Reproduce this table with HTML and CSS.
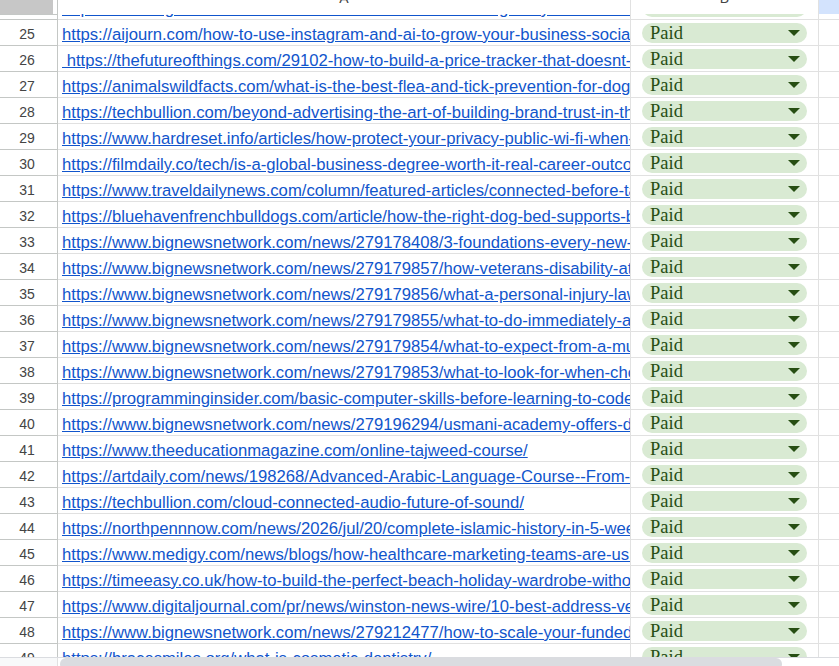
FILE: index.html
```html
<!DOCTYPE html>
<html>
<head>
<meta charset="utf-8">
<link rel="stylesheet" href="styles.css">
</head>
<body>
<div class="sheet">
  <div class="head">
    <div class="corner"><div class="corner-fill"></div></div>
    <div class="colhead"><span>A</span></div>
    <div class="colhead"><span>B</span></div>
    <div class="colhead sel"></div>
  </div>
  <div class="body">
    <div class="rows">
      <div class="row"><div class="num">24</div><div class="cell"><a class="link">https://www.bignewsnetwork.com/news/279178401/how-to-grow-your-business-online</a></div><div class="cell chipcell"><div class="chip"><span>Paid</span><i class="arrow"></i></div></div><div class="rest"></div></div>
      <div class="row"><div class="num">25</div><div class="cell"><a class="link">https://aijourn.com/how-to-use-instagram-and-ai-to-grow-your-business-social-media/</a></div><div class="cell chipcell"><div class="chip"><span>Paid</span><i class="arrow"></i></div></div><div class="rest"></div></div>
      <div class="row"><div class="num">26</div><div class="cell"><a class="link"> https://thefutureofthings.com/29102-how-to-build-a-price-tracker-that-doesnt-break/</a></div><div class="cell chipcell"><div class="chip"><span>Paid</span><i class="arrow"></i></div></div><div class="rest"></div></div>
      <div class="row"><div class="num">27</div><div class="cell"><a class="link">https://animalswildfacts.com/what-is-the-best-flea-and-tick-prevention-for-dogs/</a></div><div class="cell chipcell"><div class="chip"><span>Paid</span><i class="arrow"></i></div></div><div class="rest"></div></div>
      <div class="row"><div class="num">28</div><div class="cell"><a class="link">https://techbullion.com/beyond-advertising-the-art-of-building-brand-trust-in-the-digital-age/</a></div><div class="cell chipcell"><div class="chip"><span>Paid</span><i class="arrow"></i></div></div><div class="rest"></div></div>
      <div class="row"><div class="num">29</div><div class="cell"><a class="link">https://www.hardreset.info/articles/how-protect-your-privacy-public-wi-fi-when-traveling/</a></div><div class="cell chipcell"><div class="chip"><span>Paid</span><i class="arrow"></i></div></div><div class="rest"></div></div>
      <div class="row"><div class="num">30</div><div class="cell"><a class="link">https://filmdaily.co/tech/is-a-global-business-degree-worth-it-real-career-outcomes/</a></div><div class="cell chipcell"><div class="chip"><span>Paid</span><i class="arrow"></i></div></div><div class="rest"></div></div>
      <div class="row"><div class="num">31</div><div class="cell"><a class="link">https://www.traveldailynews.com/column/featured-articles/connected-before-takeoff/</a></div><div class="cell chipcell"><div class="chip"><span>Paid</span><i class="arrow"></i></div></div><div class="rest"></div></div>
      <div class="row"><div class="num">32</div><div class="cell"><a class="link">https://bluehavenfrenchbulldogs.com/article/how-the-right-dog-bed-supports-better-sleep/</a></div><div class="cell chipcell"><div class="chip"><span>Paid</span><i class="arrow"></i></div></div><div class="rest"></div></div>
      <div class="row"><div class="num">33</div><div class="cell"><a class="link">https://www.bignewsnetwork.com/news/279178408/3-foundations-every-new-business-needs</a></div><div class="cell chipcell"><div class="chip"><span>Paid</span><i class="arrow"></i></div></div><div class="rest"></div></div>
      <div class="row"><div class="num">34</div><div class="cell"><a class="link">https://www.bignewsnetwork.com/news/279179857/how-veterans-disability-attorneys-help</a></div><div class="cell chipcell"><div class="chip"><span>Paid</span><i class="arrow"></i></div></div><div class="rest"></div></div>
      <div class="row"><div class="num">35</div><div class="cell"><a class="link">https://www.bignewsnetwork.com/news/279179856/what-a-personal-injury-lawyer-does</a></div><div class="cell chipcell"><div class="chip"><span>Paid</span><i class="arrow"></i></div></div><div class="rest"></div></div>
      <div class="row"><div class="num">36</div><div class="cell"><a class="link">https://www.bignewsnetwork.com/news/279179855/what-to-do-immediately-after-an-accident</a></div><div class="cell chipcell"><div class="chip"><span>Paid</span><i class="arrow"></i></div></div><div class="rest"></div></div>
      <div class="row"><div class="num">37</div><div class="cell"><a class="link">https://www.bignewsnetwork.com/news/279179854/what-to-expect-from-a-multi-day-tour</a></div><div class="cell chipcell"><div class="chip"><span>Paid</span><i class="arrow"></i></div></div><div class="rest"></div></div>
      <div class="row"><div class="num">38</div><div class="cell"><a class="link">https://www.bignewsnetwork.com/news/279179853/what-to-look-for-when-choosing-a-clinic</a></div><div class="cell chipcell"><div class="chip"><span>Paid</span><i class="arrow"></i></div></div><div class="rest"></div></div>
      <div class="row"><div class="num">39</div><div class="cell"><a class="link">https://programminginsider.com/basic-computer-skills-before-learning-to-code/</a></div><div class="cell chipcell"><div class="chip"><span>Paid</span><i class="arrow"></i></div></div><div class="rest"></div></div>
      <div class="row"><div class="num">40</div><div class="cell"><a class="link">https://www.bignewsnetwork.com/news/279196294/usmani-academy-offers-dedicated-courses</a></div><div class="cell chipcell"><div class="chip"><span>Paid</span><i class="arrow"></i></div></div><div class="rest"></div></div>
      <div class="row"><div class="num">41</div><div class="cell"><a class="link">https://www.theeducationmagazine.com/online-tajweed-course/</a></div><div class="cell chipcell"><div class="chip"><span>Paid</span><i class="arrow"></i></div></div><div class="rest"></div></div>
      <div class="row"><div class="num">42</div><div class="cell"><a class="link">https://artdaily.com/news/198268/Advanced-Arabic-Language-Course--From-Basics-to-Fluency</a></div><div class="cell chipcell"><div class="chip"><span>Paid</span><i class="arrow"></i></div></div><div class="rest"></div></div>
      <div class="row"><div class="num">43</div><div class="cell"><a class="link">https://techbullion.com/cloud-connected-audio-future-of-sound/</a></div><div class="cell chipcell"><div class="chip"><span>Paid</span><i class="arrow"></i></div></div><div class="rest"></div></div>
      <div class="row"><div class="num">44</div><div class="cell"><a class="link">https://northpennnow.com/news/2026/jul/20/complete-islamic-history-in-5-weeks/</a></div><div class="cell chipcell"><div class="chip"><span>Paid</span><i class="arrow"></i></div></div><div class="rest"></div></div>
      <div class="row"><div class="num">45</div><div class="cell"><a class="link">https://www.medigy.com/news/blogs/how-healthcare-marketing-teams-are-using-ai/</a></div><div class="cell chipcell"><div class="chip"><span>Paid</span><i class="arrow"></i></div></div><div class="rest"></div></div>
      <div class="row"><div class="num">46</div><div class="cell"><a class="link">https://timeeasy.co.uk/how-to-build-the-perfect-beach-holiday-wardrobe-without-overpacking/</a></div><div class="cell chipcell"><div class="chip"><span>Paid</span><i class="arrow"></i></div></div><div class="rest"></div></div>
      <div class="row"><div class="num">47</div><div class="cell"><a class="link">https://www.digitaljournal.com/pr/news/winston-news-wire/10-best-address-verification-tools</a></div><div class="cell chipcell"><div class="chip"><span>Paid</span><i class="arrow"></i></div></div><div class="rest"></div></div>
      <div class="row"><div class="num">48</div><div class="cell"><a class="link">https://www.bignewsnetwork.com/news/279212477/how-to-scale-your-funded-account</a></div><div class="cell chipcell"><div class="chip"><span>Paid</span><i class="arrow"></i></div></div><div class="rest"></div></div>
      <div class="row"><div class="num">49</div><div class="cell"><a class="link">https://bracesmiles.org/what-is-cosmetic-dentistry/</a></div><div class="cell chipcell"><div class="chip"><span>Paid</span><i class="arrow"></i></div></div><div class="rest"></div></div>
    </div>
  </div>
  <div class="hscroll">
    <div class="hs-left"></div>
    <div class="hs-track"><div class="hs-thumb"></div></div>
  </div>
</div>
</body>
</html>
```

FILE: styles.css
```css
* { box-sizing: border-box; }
html, body { margin: 0; padding: 0; background: #fff; }
body { width: 839px; height: 666px; overflow: hidden; font-family: "Liberation Sans", Arial, sans-serif; }

.sheet { width: 839px; height: 666px; display: flex; flex-direction: column; }

.head {
  height: 14px;
  display: grid;
  grid-template-columns: 58px 573px 188px 1fr;
  flex: none;
}
.corner { border-right: 1px solid #c4c7c5; border-bottom: 1px solid #c4c7c5; }
.corner-fill { width: 53px; height: 14px; background: #c7c7c7; }
.colhead {
  height: 14px;
  overflow: hidden;
  text-align: center;
  border-right: 1px solid #e1e1e1;
  color: #444;
  font-size: 14px;
}
.colhead span { display: block; line-height: 14px; margin-top: -9px; }
.colhead.sel { background: #d3e3fd; border-right: none; }

.body { height: 643px; overflow: hidden; flex: none; }
.rows { margin-top: -20px; }

.row {
  height: 26px;
  display: grid;
  grid-template-columns: 58px 573px 188px 1fr;
}
.num {
  border-right: 1px solid #c4c7c5;
  border-bottom: 1px solid #c4c7c5;
  color: #444;
  font-size: 14px;
  text-align: center;
  padding-top: 3px;
  line-height: 22px;
  padding-right: 3px;
}
.cell {
  border-right: 1px solid #e1e1e1;
  border-bottom: 1px solid #e1e1e1;
  overflow: hidden;
  white-space: nowrap;
}
.rest { border-bottom: 1px solid #e1e1e1; }
.link {
  display: block;
  padding-left: 4px;
  padding-top: 4px;
  font-size: 16.67px;
  line-height: 21px;
  color: #1155cc;
  text-decoration: underline;
  white-space: pre;
}
.chipcell { display: flex; align-items: center; padding-left: 11px; }
.chip {
  width: 165px;
  height: 20px;
  border-radius: 10px;
  background: #d9ead3;
  display: flex;
  align-items: center;
  justify-content: space-between;
  padding: 0 7px 0 8px;
  font-family: "Liberation Serif", "Times New Roman", serif;
  font-size: 18.5px;
  color: #274e13;
}
.chip span { line-height: 20px; padding-top: 1px; }
.arrow {
  width: 0; height: 0;
  border-left: 6px solid transparent;
  border-right: 6px solid transparent;
  border-top: 6px solid #274e13;
}

.hscroll { height: 9px; flex: none; display: flex; border-top: 1px solid #dadce0; }
.hs-left { width: 58px; background: #f8f9fa; border-right: 1px solid #e1e1e1; }
.hs-track { flex: 1; padding-left: 2px; background: #fff; }
.hs-thumb { width: 722px; height: 12px; background: #dadce0; border-radius: 6px; }
```
